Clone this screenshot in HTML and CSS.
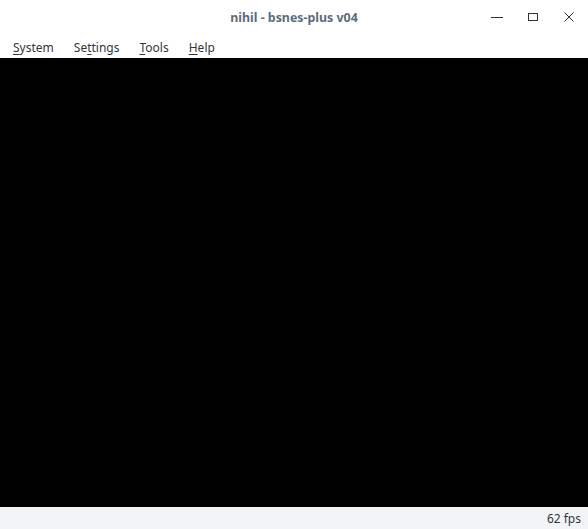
FILE: index.html
```html
<!DOCTYPE html>
<html>
<head>
<meta charset="utf-8">
<link rel="stylesheet" href="styles.css">
</head>
<body>
<div class="window">
  <div class="titlebar">
    <div class="title">nihil - bsnes-plus v04</div>
    <div class="controls">
      <svg class="ctl" width="14" height="14" viewBox="0 0 14 14"><path d="M1 7.5h12" stroke="#2e3436" stroke-width="1"/></svg>
      <svg class="ctl" width="14" height="14" viewBox="0 0 14 14"><rect x="2.5" y="3.5" width="9" height="7" fill="none" stroke="#2e3436" stroke-width="1"/></svg>
      <svg class="ctl" width="14" height="14" viewBox="0 0 14 14"><path d="M2.5 2.5l9 9M11.5 2.5l-9 9" stroke="#2e3436" stroke-width="1"/></svg>
    </div>
  </div>
  <div class="menubar">
    <span class="menu"><u>S</u>ystem</span>
    <span class="menu">Se<u>t</u>tings</span>
    <span class="menu"><u>T</u>ools</span>
    <span class="menu"><u>H</u>elp</span>
  </div>
  <div class="screen"></div>
  <div class="statusbar"><span class="fps">62 fps</span></div>
</div>
</body>
</html>
```
FILE: styles.css
```css
html, body {
  margin: 0;
  padding: 0;
  background: #ffffff;
}
.window {
  width: 588px;
  height: 529px;
  display: flex;
  flex-direction: column;
  font-family: "Noto Sans", sans-serif;
}
.titlebar {
  height: 35px;
  flex: 0 0 35px;
  background: #ffffff;
  position: relative;
  display: flex;
  align-items: center;
  justify-content: center;
}
.title {
  font-size: 12.4px;
  font-weight: bold;
  color: #5d6b7e;
  margin-top: -1px;
}
.controls {
  position: absolute;
  right: 12px;
  top: 10px;
  display: flex;
  gap: 22px;
}
.ctl {
  display: block;
}
.menubar {
  height: 23px;
  flex: 0 0 23px;
  background: #ffffff;
  display: flex;
  align-items: center;
  padding-left: 13px;
  padding-top: 2px;
  box-sizing: border-box;
  gap: 20px;
  font-size: 12px;
  color: #31363b;
}
.menu u {
  text-decoration: underline;
  text-underline-offset: 2px;
}
.screen {
  flex: 1 1 auto;
  background: #000000;
}
.statusbar {
  height: 22px;
  flex: 0 0 22px;
  background: #f3f4f6;
  display: flex;
  align-items: center;
  justify-content: flex-end;
  padding-right: 7px;
  font-size: 12px;
  color: #31363b;
}
```
